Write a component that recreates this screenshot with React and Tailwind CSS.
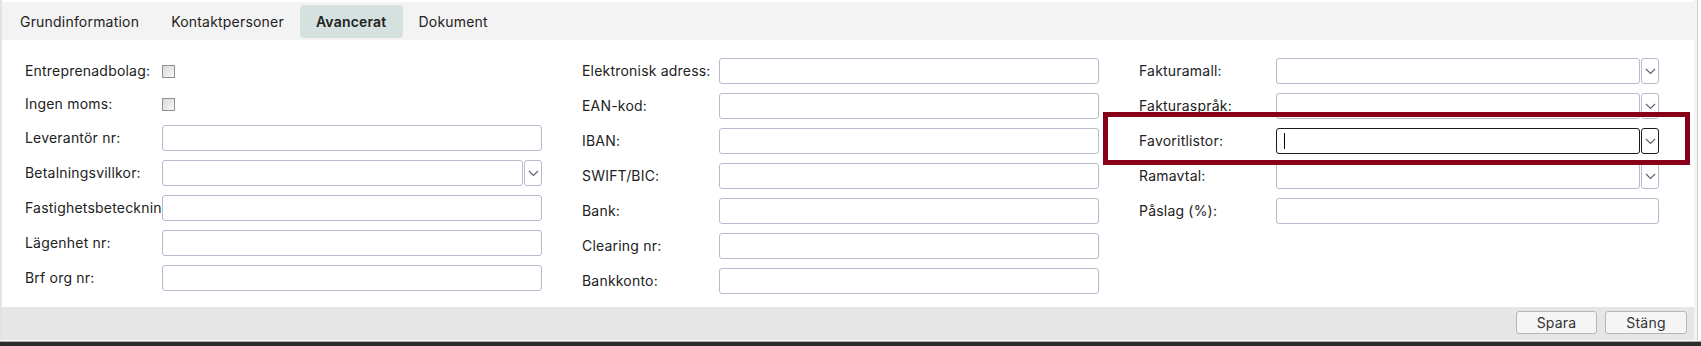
import React from 'react'

const TABS = ['Grundinformation', 'Kontaktpersoner', 'Avancerat', 'Dokument']

const LEFT = [
  { label: 'Entreprenadbolag:', type: 'check' },
  { label: 'Ingen moms:', type: 'check' },
  { label: 'Leverantör nr:' },
  { label: 'Betalningsvillkor:', type: 'select' },
  { label: 'Fastighetsbeteckning:' },
  { label: 'Lägenhet nr:' },
  { label: 'Brf org nr:' },
]

const MIDDLE = [
  { label: 'Elektronisk adress:' },
  { label: 'EAN-kod:' },
  { label: 'IBAN:' },
  { label: 'SWIFT/BIC:' },
  { label: 'Bank:' },
  { label: 'Clearing nr:' },
  { label: 'Bankkonto:' },
]

const RIGHT = [
  { label: 'Fakturamall:', type: 'select' },
  { label: 'Fakturaspråk:', type: 'select' },
  { label: 'Favoritlistor:', type: 'select', focused: true },
  { label: 'Ramavtal:', type: 'select' },
  { label: 'Påslag (%):' },
]

function Chevron() {
  return (
    <svg width="11" height="7" viewBox="0 0 11 7" fill="none">
      <polyline points="1,1 5.5,5.5 10,1" stroke="#5a5f6a" strokeWidth="1.1" />
    </svg>
  )
}

function Field({ label, type, focused }) {
  const border = focused ? 'border-[#1b1b1b]' : 'border-[#b9bacb]'
  return (
    <div className={`flex items-center ${type === 'check' ? 'h-[24px]' : 'h-[26px]'}`}>
      <div className="w-[137px] shrink-0 overflow-hidden whitespace-nowrap pb-[2px]">{label}</div>
      {type === 'check' && (
        <span className="w-[13px] h-[13px] border border-[#8f9090] bg-linear-to-br from-[#d9d9d9] to-[#f7f7f7]" />
      )}
      {(type === undefined || type === 'select') && (
        <div className="flex flex-1 h-full">
          <div className={`flex-1 h-full border ${border} rounded-[3px] bg-white flex items-center`}>
            {focused && <span className="ml-[7px] w-px h-[16px] bg-black" />}
          </div>
          {type === 'select' && (
            <div className={`ml-px w-[18px] h-full border ${border} rounded-[3px] bg-white flex items-center justify-center`}>
              <Chevron />
            </div>
          )}
        </div>
      )}
    </div>
  )
}

export default function App() {
  return (
    <div className="relative w-[1701px] h-[346px] overflow-hidden bg-white text-[14px] tracking-[0.2px] text-[#222] font-['Inter','Noto_Sans',sans-serif]">
      <div className="flex h-[340px]">
        <div className="w-[2px] bg-[#e2e2e2]" />
        <div className="flex-1 flex flex-col">
          <div className="h-[2px] bg-white" />
          <div className="h-[38px] bg-[#f3f3f3] flex items-start pt-[3px] px-[2px]">
            {TABS.map(t => (
              <div key={t}
                className={`h-[33px] px-[16px] flex items-center rounded-[4px] pb-px ${t === 'Avancerat' ? 'bg-[#d5e1de] font-semibold' : ''}`}>
                {t}
              </div>
            ))}
          </div>
          <div className="h-[267px] bg-white pl-[23px] pt-[18px]">
            <div className="grid grid-cols-[517px_517px_520px] gap-x-[40px]">
              <div className="flex flex-col gap-[9px] pt-px">
                {LEFT.map(f => <Field key={f.label} {...f} />)}
              </div>
              <div className="flex flex-col gap-[9px]">
                {MIDDLE.map(f => <Field key={f.label} {...f} />)}
              </div>
              <div className="flex flex-col gap-[9px]">
                {RIGHT.map(f => <Field key={f.label} {...f} />)}
              </div>
            </div>
          </div>
          <div className="flex-1 bg-[#e6e6e6] flex justify-end items-start pt-[4px] pr-[7px] gap-[8px]">
            <button className="w-[81px] h-[23px] bg-[#f5f5f5] border border-[#b7b7b7] rounded-[3px] text-[14px] text-[#333]">Spara</button>
            <button className="w-[82px] h-[23px] bg-[#f5f5f5] border border-[#b7b7b7] rounded-[3px] text-[14px] text-[#333]">Stäng</button>
          </div>
        </div>
        <div className="w-[3px] bg-[#f4f4f4]" />
        <div className="w-px bg-[#c9c9c9]" />
        <div className="w-[3px] bg-white" />
      </div>
      <div className="h-px bg-[#fafafa]" />
      <div className="h-px bg-[#a9a9a9]" />
      <div className="h-[4px] bg-[#2c2c2c]" />

      <div className="absolute left-[1103px] top-[112px] w-[587px] h-[53px] border-[5px] border-[#880018]" />
    </div>
  )
}
